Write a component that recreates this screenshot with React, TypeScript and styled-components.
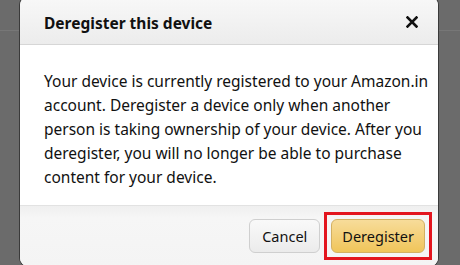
import React from "react";
import styled, { createGlobalStyle } from "styled-components";

const GlobalStyle = createGlobalStyle`
	html, body {
		margin: 0;
		padding: 0;
		background: #6b6b6b;
		overflow: hidden;
	}
	body {
		font-family: "Noto Sans", "Open Sans", Arial, sans-serif;
		color: #111;
	}
`;

const Backdrop = styled.div`
	width: 460px;
	height: 265px;
	background: #6b6b6b;
	position: relative;
	overflow: hidden;
`;

const PageLine = styled.div`
	position: absolute;
	left: 0;
	right: 0;
	top: 30px;
	height: 1px;
	background: #777;
`;

const Dialog = styled.div`
	position: relative;
	margin: -3px 0 0 20px;
	width: 418px;
	border-radius: 8px;
	background: #fff;
	box-shadow: 0 0 0 1px #3a3a3a;
	overflow: hidden;
`;

const Header = styled.div`
	display: flex;
	align-items: center;
	justify-content: space-between;
	height: 48px;
	padding: 0 14px 0 24px;
	background: linear-gradient(#f8f8f8, #ececec);
	border-bottom: 1px solid #d6d6d6;
	box-sizing: border-box;
`;

const Title = styled.h4`
	margin: 5px 0 0;
	font-size: 15.5px;
	font-weight: 700;
	color: #111;
`;

const CloseButton = styled.button`
	display: flex;
	align-items: center;
	justify-content: center;
	width: 24px;
	height: 24px;
	margin-top: 2px;
	padding: 0;
	border: none;
	background: none;
	cursor: pointer;
`;

const Body = styled.div`
	padding: 24px 8px 0 24px;
	font-size: 15.5px;
	line-height: 24px;
	color: #111;
	height: 160px;
	box-sizing: border-box;
`;

const Footer = styled.div`
	display: flex;
	justify-content: flex-end;
	align-items: center;
	gap: 4px;
	height: 61px;
	padding: 0 6px 0 0;
	background: linear-gradient(#efefef, #f6f6f6 20%, #f4f4f4);
	border-top: 1px solid #e2e2e2;
	box-sizing: border-box;
`;

const Highlight = styled.span`
	display: flex;
	padding: 4px 4px;
	border: 3px solid #e3151e;
`;

const Button = styled.button<{ $primary?: boolean }>`
	height: 34px;
	padding: 0 ${(p) => (p.$primary ? "10px" : "12px")};
	font-family: inherit;
	font-size: 14.5px;
	color: #111;
	border-radius: 6px;
	cursor: pointer;
	border: 1px solid ${(p) => (p.$primary ? "#d3b062" : "#cfcfcf")};
	background: ${(p) =>
		p.$primary
			? "linear-gradient(#f7dc9a, #f0c55a)"
			: "linear-gradient(#f9f9f9, #ebebeb)"};
`;

export default function App() {
	return (
		<>
			<GlobalStyle />
			<Backdrop>
				<PageLine />
				<Dialog>
					<Header>
						<Title>Deregister this device</Title>
						<CloseButton aria-label='Close'>
							<svg width='12' height='12' viewBox='0 0 12 12'>
								<path
									d='M1.5 1.5 L10.5 10.5 M10.5 1.5 L1.5 10.5'
									stroke='#111'
									strokeWidth='2.6'
									strokeLinecap='square'
								/>
							</svg>
						</CloseButton>
					</Header>
					<Body>
						Your device is currently registered to your Amazon.in account.
						Deregister a device only when another person is taking ownership of
						your device. After you deregister, you will no longer be able to
						purchase content for your device.
					</Body>
					<Footer>
						<Button>Cancel</Button>
						<Highlight>
							<Button $primary>Deregister</Button>
						</Highlight>
					</Footer>
				</Dialog>
			</Backdrop>
		</>
	);
}
